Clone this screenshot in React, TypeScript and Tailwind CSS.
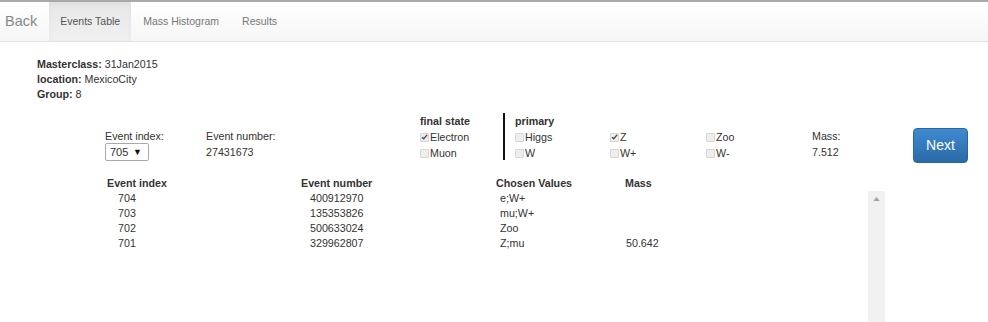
import React from 'react';

type Row = { index: string; number: string; chosen: string; mass: string };

const rows: Row[] = [
  { index: '704', number: '400912970', chosen: 'e;W+', mass: '' },
  { index: '703', number: '135353826', chosen: 'mu;W+', mass: '' },
  { index: '702', number: '500633024', chosen: 'Zoo', mass: '' },
  { index: '701', number: '329962807', chosen: 'Z;mu', mass: '50.642' },
];

function Check({ label, checked }: { label: string; checked?: boolean }) {
  return (
    <div className="flex items-center h-[16px]">
      <span className="relative w-[9px] h-[9px] mr-[1px] border border-[#d6d6d6] bg-[#eeeeee] rounded-[1px] flex items-center justify-center">
        {checked && (
          <svg viewBox="0 0 10 10" className="w-[8px] h-[8px]">
            <path d="M1.5 5.2 L4 7.6 L8.6 2" fill="none" stroke="#444" strokeWidth="2" />
          </svg>
        )}
      </span>
      <span>{label}</span>
    </div>
  );
}

export default function App() {
  return (
    <div className="w-[988px] h-[322px] overflow-hidden bg-white text-[#333] text-[10.7px] leading-[15px] font-['Liberation_Sans',Arial,sans-serif]">
      {/* navbar */}
      <div className="border-t-2 border-[#a9a9a9]">
        <div className="h-[40px] flex items-stretch bg-gradient-to-b from-white to-[#f6f6f6] border-b border-[#e3e3e3]">
          <div className="pl-[5px] pr-[12px] flex items-center text-[14.5px] text-[#888]">Back</div>
          <div className="px-[11px] flex items-center text-[10.5px] text-[#555] bg-gradient-to-b from-[#e8e8e8] to-[#f0f0f0] shadow-[inset_0_3px_6px_rgba(0,0,0,0.04)]">
            Events Table
          </div>
          <div className="px-[12px] flex items-center text-[10.5px] text-[#777]">Mass Histogram</div>
          <div className="px-[11px] flex items-center text-[10.5px] text-[#777]">Results</div>
        </div>
      </div>

      {/* info */}
      <div className="pl-[37px] pt-[15px]">
        <div><b>Masterclass:</b> 31Jan2015</div>
        <div><b>location:</b> MexicoCity</div>
        <div><b>Group:</b> 8</div>
      </div>

      {/* controls */}
      <div className="flex pl-[105px] mt-[12px]">
        <div className="w-[101px] pt-[15px]">
          <div>Event index:</div>
          <div className="mt-[-1px] w-[44px] h-[18px] border border-[#a9a9a9] rounded-[2px] flex items-center justify-between pl-[4px] pr-[6px] text-[11px]">
            <span>705</span>
            <span className="text-[9px] text-[#111]">▼</span>
          </div>
        </div>
        <div className="w-[214px] pt-[15px]">
          <div>Event number:</div>
          <div className="mt-[1px]">27431673</div>
        </div>
        <div className="w-[83px]">
          <div className="font-bold">final state</div>
          <Check label="Electron" checked />
          <Check label="Muon" />
        </div>
        <div className="w-[2px] h-[47px] bg-[#111] mt-[-1px]" />
        <div className="pl-[10px]">
          <div className="font-bold">primary</div>
          <div className="grid grid-cols-[95px_96px_106px]">
            <Check label="Higgs" />
            <Check label="Z" checked />
            <Check label="Zoo" />
            <Check label="W" />
            <Check label="W+" />
            <Check label="W-" />
          </div>
        </div>
        <div className="w-[101px] pt-[15px]">
          <div>Mass:</div>
          <div className="mt-[1px]">7.512</div>
        </div>
        <div className="pt-[14px]">
          <button className="w-[55px] h-[35px] rounded-[4px] border border-[#2b669a] bg-gradient-to-b from-[#3f8ad0] to-[#2a6aa7] text-white text-[14px]">
            Next
          </button>
        </div>
      </div>

      {/* table */}
      <div className="pl-[107px] mt-[13px]">
        <div className="flex font-bold">
          <div className="w-[194px]">Event index</div>
          <div className="w-[195px]">Event number</div>
          <div className="w-[129px]">Chosen Values</div>
          <div>Mass</div>
        </div>
        <div className="flex">
          <div className="w-[761px]">
            {rows.map((r) => (
              <div key={r.index} className="flex">
                <div className="w-[194px] pl-[11px]">{r.index}</div>
                <div className="w-[195px] pl-[9px]">{r.number}</div>
                <div className="w-[129px] pl-[4px]">{r.chosen}</div>
                <div className="pl-[1px]">{r.mass}</div>
              </div>
            ))}
          </div>
          <div className="w-[17px] h-[140px] bg-[#f1f1f1] flex justify-center pt-[6px]">
            <svg viewBox="0 0 8 5" className="w-[7px] h-[4px]">
              <path d="M4 0 L8 5 L0 5 Z" fill="#a3a3a3" />
            </svg>
          </div>
        </div>
      </div>
    </div>
  );
}
